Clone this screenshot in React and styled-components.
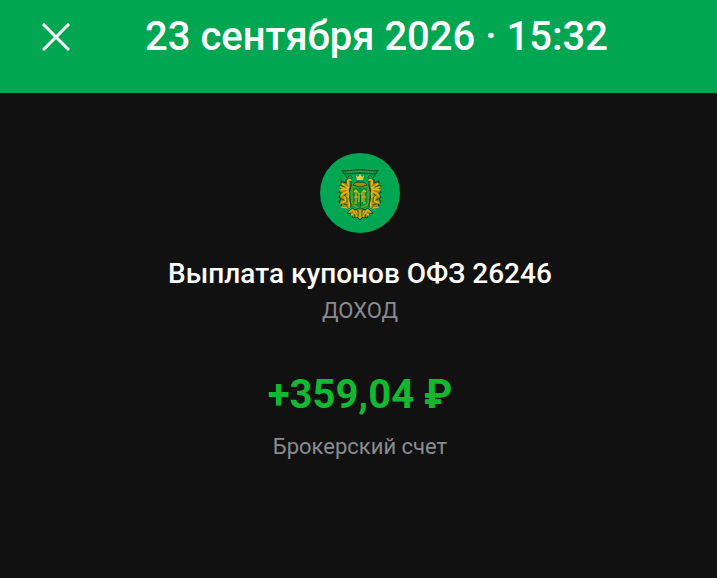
import React from 'react'
import styled, { createGlobalStyle } from 'styled-components'

const colors = {
  brand: '#00a652',
  background: '#111111',
  text: '#ffffff',
  muted: '#8a8b90',
  income: '#10b92f',
  gold: '#e0b61c',
  goldDark: '#a48712',
  emblem: '#0b4f20',
}

const GlobalStyle = createGlobalStyle`
  *, *::before, *::after {
    box-sizing: border-box;
  }
  body {
    margin: 0;
    background: ${colors.background};
    color: ${colors.text};
    font-family: Roboto, sans-serif;
  }
`

const Page = styled.div`
  display: flex;
  flex-direction: column;
  min-height: 100vh;
`

const Header = styled.header`
  display: flex;
  align-items: center;
  padding: 13px 40px 32px 36px;
  background: ${colors.brand};
`

const CloseButton = styled.button`
  display: flex;
  align-items: center;
  justify-content: center;
  flex: none;
  width: 40px;
  height: 48px;
  padding: 0;
  border: 0;
  background: none;
  color: ${colors.text};
  cursor: pointer;
`

const Title = styled.h1`
  flex: 1;
  margin: 0;
  font-size: 40px;
  font-weight: 500;
  line-height: 48px;
  text-align: center;
`

const Details = styled.main`
  display: flex;
  flex-direction: column;
  align-items: center;
  padding: 60px 24px 60px 27px;
  text-align: center;
`

const Logo = styled.div`
  width: 80px;
  height: 80px;
  margin-bottom: 24px;
  border-radius: 50%;
  background: ${colors.brand};
`

const Name = styled.h2`
  margin: 0;
  font-size: 28px;
  font-weight: 500;
  line-height: 34px;
`

const Caption = styled.p`
  margin: 0;
  font-size: 22px;
  line-height: 40px;
  color: ${colors.muted};
`

const Amount = styled.p`
  margin: 40px 0 8px;
  font-size: 40px;
  font-weight: 700;
  line-height: 48px;
  color: ${colors.income};
`

const CloseIcon = () => (
  <svg width="28" height="28" viewBox="0 0 28 28" fill="none" stroke="currentColor" strokeWidth="3" aria-hidden="true">
    <path d="M1 1l26 26M27 1L1 27" />
  </svg>
)

/**
 * One of the two griffins holding the shield, the right one is mirrored.
 */
const Griffin = () => (
  <g strokeLinecap="round" strokeLinejoin="round" fill="none">
    <path d="M31 26l-5 1 0 3-5-2 1 4-3 1 2 3-2 3 3 2-3 3 2 2-2 3 3 1-1 3 5 2 5-2-1-6-1-7 2-7z" fill={colors.goldDark} stroke={colors.emblem} strokeWidth="1.3" />
    <path d="M31 27c-3-1-4 1-3 3s2 4 0 5l-6-4M28 36l-8 1M28 38c-3 2-6 2-7 5M28 39c2 4-2 6 0 9s2 4 1 6M21 50l5-2M20 34l4 1M22 54l5 1M24 44l2 3" stroke={colors.gold} strokeWidth="1.7" />
    <path d="M25 34l-3-1M26 41l-2 2M30 32v4M27 45v4M22 46l2 1M24 51l3 1" stroke={colors.emblem} strokeWidth="0.9" />
  </g>
)

const Emblem = () => (
  <svg width="80" height="80" viewBox="0 0 80 80" role="img" aria-label="ОФЗ">
    <path d="M25 21l2 4 3-3 3 3M55 21l-2 4-3-3-3 3" fill="none" stroke={colors.emblem} strokeWidth="1" />
    <path d="M22 17l4 1q14-3 28 0l4-1-2 4q-16-2-32 0z" fill="#168646" stroke={colors.emblem} strokeWidth="1" />
    <path d="M26 19.5q14-2 28 0" fill="none" stroke="#4fb866" strokeWidth="1" strokeDasharray="1.4 1" />
    <Griffin />
    <g transform="translate(80 0) scale(-1 1)">
      <Griffin />
    </g>
    <path d="M32 34h16v15q0 3-4 4l-4 3-4-3q-4-1-4-4z" fill="#0a8f3d" stroke={colors.goldDark} strokeWidth="1.2" />
    <path d="M36 37v12M44 37v12M39 40v9M42 40v9M34 39l2-2 3 4M46 39l-2-2-3 4M34 44h4M42 44h4M34 50h3M43 50h3" fill="none" stroke={colors.gold} strokeWidth="1.1" />
    <path d="M40.5 42v11" stroke={colors.emblem} strokeWidth="0.8" />
    <path d="M33 32l3-3h8l3 3-7 2z" fill={colors.goldDark} stroke={colors.emblem} strokeWidth="0.8" />
    <path d="M37 27l-1-5 2 2 2-3 2 3 2-2-1 5z" fill="#f1c92c" />
    <path d="M36 29h8" stroke={colors.emblem} strokeWidth="0.8" />
    <path d="M27 60l5-5 3 2 5-2 5 2 3-2 5 5-4 1-2 4-4-1-3 3-3-3-4 1-2-4z" fill={colors.goldDark} stroke={colors.emblem} strokeWidth="1" />
    <path d="M29 59l4-2 2 4-4 1M51 59l-4-2-2 4 4 1M36 58l2 3-2 3M44 58l-2 3 2 3M40 57v8" fill="none" stroke={colors.gold} strokeWidth="1.3" />
    <path d="M38 57v6M42 57v6M34 61l1 3M46 61l-1 3" stroke={colors.emblem} strokeWidth="0.8" />
  </svg>
)

/**
 * Details of a single brokerage account operation.
 */
function App() {
  return (
    <Page>
      <GlobalStyle />
      <Header>
        <CloseButton type="button" aria-label="Закрыть">
          <CloseIcon />
        </CloseButton>
        <Title>23 сентября 2026 · 15:32</Title>
      </Header>
      <Details>
        <Logo>
          <Emblem />
        </Logo>
        <Name>Выплата купонов ОФЗ 26246</Name>
        <Caption>ДОХОД</Caption>
        <Amount>+359,04 ₽</Amount>
        <Caption>Брокерский счет</Caption>
      </Details>
    </Page>
  )
}

export default App
